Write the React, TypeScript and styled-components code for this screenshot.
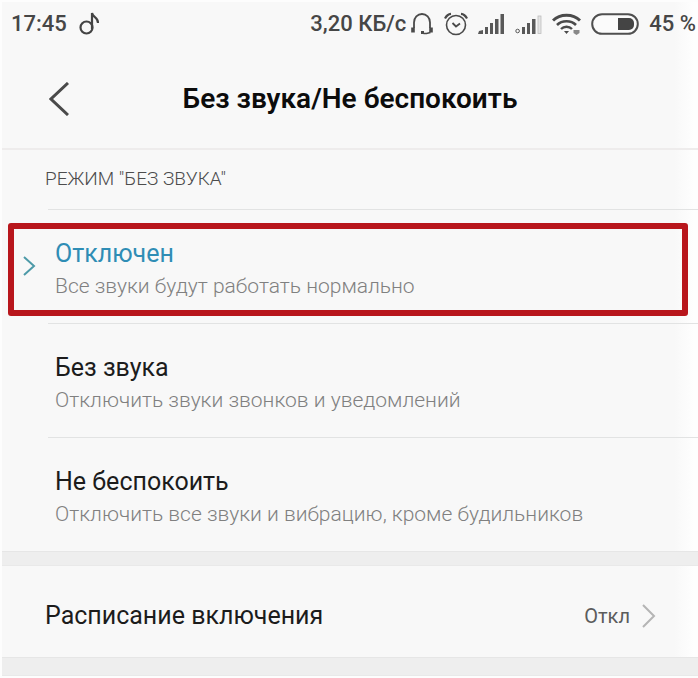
import React, { useState } from "react";
import styled, { createGlobalStyle } from "styled-components";

const GlobalStyle = createGlobalStyle`
  * { box-sizing: border-box; }
  body { margin: 0; background: #fdfdfd; font-family: Roboto, "Noto Sans", sans-serif; }
  button { font: inherit; color: inherit; border: 0; padding: 0; background: none; cursor: pointer; }
`;

const Screen = styled.main`
  margin: 2px 0 0 2px;
  background: linear-gradient(to left, #fefefe 4px, #f8f8f8 24px);
`;

const StatusBar = styled.div`
  display: flex;
  align-items: center;
  justify-content: space-between;
  height: 44px;
  padding: 0 2px 0 9px;
  font-size: 22px;
  line-height: 28px;
  font-weight: 500;
  color: #464646;
  white-space: nowrap;
`;

const StatusGroup = styled.div<{ $gap: number }>`
  display: flex;
  align-items: center;
  gap: ${(p) => p.$gap}px;
  svg { display: block; flex: none; }
`;

const Header = styled.header`
  display: grid;
  grid-template-columns: 72px 1fr 72px;
  align-items: center;
  height: 104px;
  padding-top: 4px;
  border-bottom: 2px solid #eeecec;
`;

const BackButton = styled.button`
  display: flex;
  justify-content: flex-end;
  height: 48px;
  align-items: center;
  padding-right: 5px;
`;

const Title = styled.h1`
  margin: 0;
  font-size: 28px;
  line-height: 36px;
  font-weight: 600;
  text-align: center;
  color: #0c0c0c;
`;

const Options = styled.fieldset`
  margin: 0;
  padding: 0;
  border: 0;
  min-width: 0;
`;

const Legend = styled.legend`
  display: block;
  height: 59px;
  padding: 16px 0 0 43px;
  font-size: 19px;
  line-height: 26px;
  font-weight: 300;
  color: #4c4c4c;
`;

const Option = styled.label`
  display: grid;
  grid-template-columns: 53px 1fr;
  align-items: center;
  position: relative;
  height: 114px;
  cursor: pointer;
  background: linear-gradient(#e2e3e3, #e2e3e3) 46px 0 / 100% 1px no-repeat;
`;

const Radio = styled.input`
  position: absolute;
  opacity: 0;
  inset: 0;
  margin: 0;
`;

const Marker = styled.span`
  display: flex;
  justify-content: center;
  padding-left: 2px;
  svg { display: block; }
`;

const OptionText = styled.span`
  display: block;
  padding-top: 8px;
`;

const OptionTitle = styled.span<{ $active: boolean }>`
  display: block;
  font-size: 25px;
  line-height: 32px;
  color: ${(p) => (p.$active ? "#2f8db5" : "#1c1c1c")};
`;

const OptionNote = styled.span`
  display: block;
  font-size: 21px;
  line-height: 32px;
  font-weight: 300;
  color: #808080;
`;

const Highlight = styled.span`
  position: absolute;
  inset: 14px 10px 7px 6px;
  border: 6px solid #b8161c;
  border-radius: 3px;
  pointer-events: none;
`;

const Band = styled.div<{ $size: number }>`
  height: ${(p) => p.$size}px;
  background: #eeeeee;
  border-top: 1px solid #e6e6e6;
  border-bottom: 1px solid #e9e9e9;
`;

const LinkRow = styled.button`
  display: flex;
  align-items: center;
  justify-content: space-between;
  width: 100%;
  height: 91px;
  padding: 8px 42px 0 43px;
  text-align: left;
`;

const RowTitle = styled.span`
  font-size: 25px;
  line-height: 32px;
  color: #1c1c1c;
`;

const RowValue = styled.span`
  display: flex;
  align-items: center;
  gap: 12px;
  font-size: 20px;
  line-height: 28px;
  color: #5c5c5c;
  svg { display: block; }
`;

const NoteIcon = () => (
  <svg width="21" height="24" viewBox="0 0 21 24" fill="none" stroke="#444" strokeWidth="2.200">
    <circle cx="7.500" cy="15.500" r="6" />
    <path d="M13 17V1c1 5 6 3.500 6 10" />
  </svg>
);

const HeadphonesIcon = () => (
  <svg width="24" height="24" viewBox="0 0 24 24" fill="none" stroke="#4a4a4a" strokeWidth="1.800">
    <path d="M4 16V10.500a8 8.500 0 0 1 16 0V16" />
    <path d="M3 15.500v5M21 15.500v5" strokeWidth="3.600" />
    <path d="M20.500 20.500l-4 1h-3" strokeWidth="1.600" />
    <path d="M11 20.500h3" strokeWidth="3" />
  </svg>
);

const AlarmIcon = () => (
  <svg width="24" height="24" viewBox="0 0 24 24" fill="none" stroke="#4a4a4a" strokeWidth="1.600">
    <circle cx="12" cy="13" r="9.500" />
    <path d="M8.500 11l3.500 3.500 4-3" strokeWidth="1.800" />
    <path d="M1 6.500C2.500 3.500 4.500 2 7 1.800M23 6.500C21.500 3.500 19.500 2 17 1.800" strokeWidth="2.200" />
  </svg>
);

const SignalIcon = ({ weak = false }: { weak?: boolean }) => (
  <svg width="27" height="20" viewBox="0 0 27 20" fill="#595959">
    {weak ? <circle cx="2.600" cy="17" r="1.800" fill="none" stroke="#595959" /> : <path d="M0 20l1-3 4-1v4z" />}
    <rect x="7" y="13" width="3" height="7" />
    <rect x="12" y="9" width="3" height="11" />
    <rect x="17" y="5" width="3.500" height="15" />
    {weak ? (
      <rect x="23" y="2" width="3" height="17.500" fill="#e4e4e4" stroke="#bdbdbd" strokeWidth="0.800" />
    ) : (
      <rect x="22.500" y="0" width="3.500" height="20" />
    )}
  </svg>
);

const WifiIcon = () => (
  <svg width="29" height="22" viewBox="0 0 29 22" fill="none" stroke="#4a4a4a">
    <path d="M1 7.500C8 .5 21 .5 28 7.500" strokeWidth="3" />
    <path d="M5 12C10 7 19 7 24 12" strokeWidth="2.600" />
    <path d="M9 16c3-3 8-3 11 0" strokeWidth="2.400" />
    <path d="M12 18h5l-2.500 3z" fill="#4a4a4a" stroke="none" />
    <path d="M21.500 17h6v3l-3 2-3-2z" fill="#888" stroke="none" />
  </svg>
);

const BatteryIcon = () => (
  <svg width="48" height="22" viewBox="0 0 48 22">
    <rect x="1.200" y="1.200" width="45.600" height="19.600" rx="9.800" fill="#fbfbfb" stroke="#4f4f4f" strokeWidth="2" />
    <path d="M27 5h11a5 5 0 0 1 5 5v2a5 5 0 0 1-5 5H27z" fill="#444" />
  </svg>
);

type ChevronProps = { w: number; h: number; color: string; stroke: number; back?: boolean };
const Chevron = ({ w, h, color, stroke, back }: ChevronProps) => (
  <svg width={w} height={h} viewBox={`0 0 ${w} ${h}`} fill="none" stroke={color} strokeWidth={stroke}>
    <path
      d={back ? `M${w - 1} 1L2 ${h / 2}L${w - 1} ${h - 1}` : `M1 1L${w - 2} ${h / 2}L1 ${h - 1}`}
    />
  </svg>
);

const modes = [
  { id: "off", title: "Отключен", note: "Все звуки будут работать нормально" },
  { id: "silent", title: "Без звука", note: "Отключить звуки звонков и уведомлений" },
  { id: "dnd", title: "Не беспокоить", note: "Отключить все звуки и вибрацию, кроме будильников" },
];

export default function App() {
  const [mode, setMode] = useState("off");
  return (
    <>
      <GlobalStyle />
      <Screen>
        <StatusBar>
          <StatusGroup $gap={12}>
            <span>17:45</span>
            <NoteIcon />
          </StatusGroup>
          <StatusGroup $gap={10}>
            <StatusGroup $gap={4}>
              <span>3,20 КБ/с</span>
              <HeadphonesIcon />
            </StatusGroup>
            <AlarmIcon />
            <SignalIcon />
            <SignalIcon weak />
            <WifiIcon />
            <BatteryIcon />
            <span>45 %</span>
          </StatusGroup>
        </StatusBar>
        <Header>
          <BackButton aria-label="Назад">
            <Chevron w={20} h={34} color="#4a4a4a" stroke={3} back />
          </BackButton>
          <Title>Без звука/Не беспокоить</Title>
        </Header>
        <Options>
          <Legend>РЕЖИМ "БЕЗ ЗВУКА"</Legend>
          {modes.map((m) => (
            <Option key={m.id}>
              <Radio type="radio" name="mode" checked={mode === m.id} onChange={() => setMode(m.id)} />
              <Marker>{mode === m.id && <Chevron w={13} h={20} color="#4d9aa8" stroke={2} />}</Marker>
              <OptionText>
                <OptionTitle $active={mode === m.id}>{m.title}</OptionTitle>
                <OptionNote>{m.note}</OptionNote>
              </OptionText>
              {m.id === "off" && <Highlight />}
            </Option>
          ))}
        </Options>
        <Band $size={15} />
        <LinkRow>
          <RowTitle>Расписание включения</RowTitle>
          <RowValue>
            Откл
            <Chevron w={14} h={24} color="#b5b5b5" stroke={2} />
          </RowValue>
        </LinkRow>
        <Band $size={19} />
      </Screen>
    </>
  );
}
